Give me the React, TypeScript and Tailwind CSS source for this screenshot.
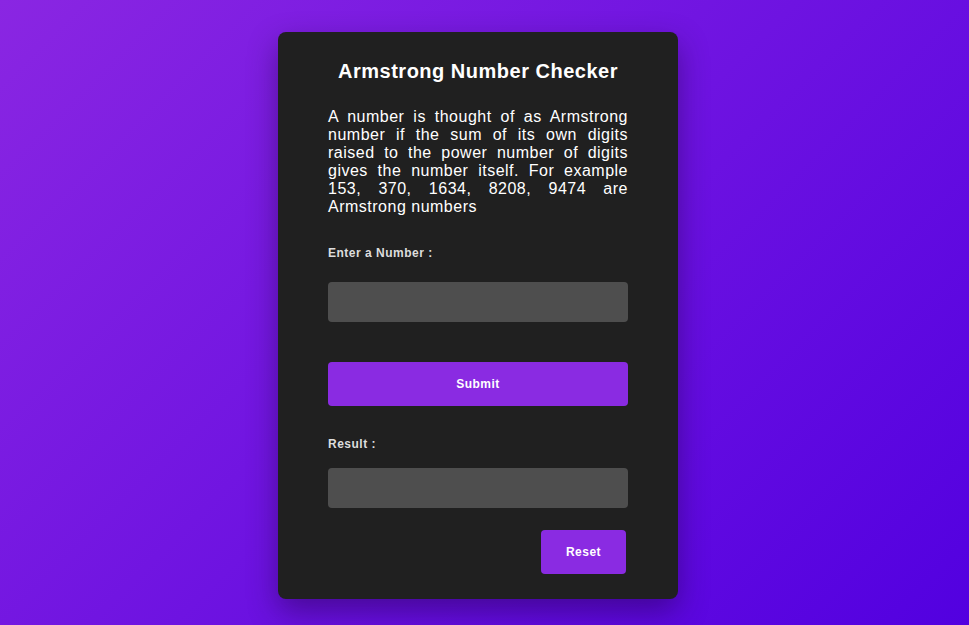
export default function App() {
  return (
    <div className="min-h-screen w-full bg-[linear-gradient(135deg,#8a26e2,#5200e0)] pt-[32px] pr-[13px] flex justify-center items-start font-['Liberation_Sans',Arial,sans-serif] tracking-[0.5px]">
      {/* card */}
      <div className="w-[400px] rounded-lg bg-[#202020] px-[50px] pt-[28px] pb-[25px] shadow-[0_12px_30px_rgba(30,0,60,0.45)]">
        <h1 className="text-center text-[20px] font-bold leading-[23px] text-white">Armstrong Number Checker</h1>
        <p className="mt-[25px] text-justify text-[16px] leading-[18px] text-white">
          A number is thought of as Armstrong number if the sum of its own digits raised to the power number of digits gives
          the number itself. For example 153, 370, 1634, 8208, 9474 are Armstrong numbers
        </p>

        <label className="mt-[30px] block text-[12px] font-bold leading-[14px] text-[#dddddd]">Enter a Number :</label>
        <input
          type="text"
          className="mt-[22px] block h-[40px] w-full rounded bg-[#4e4e4e] px-3 text-[14px] text-white outline-none"
        />

        <button className="mt-[40px] block h-[44px] w-full rounded bg-[#8a2be2] text-[12px] font-bold text-white">
          Submit
        </button>

        <label className="mt-[31px] block text-[12px] font-bold leading-[14px] text-[#dddddd]">Result :</label>
        <div className="mt-[17px] h-[40px] w-full rounded bg-[#4e4e4e]" />

        <div className="mt-[22px] flex justify-end pr-[2px]">
          <button className="h-[44px] w-[85px] rounded bg-[#8a2be2] text-[12px] font-bold text-white">Reset</button>
        </div>
      </div>
    </div>
  );
}
